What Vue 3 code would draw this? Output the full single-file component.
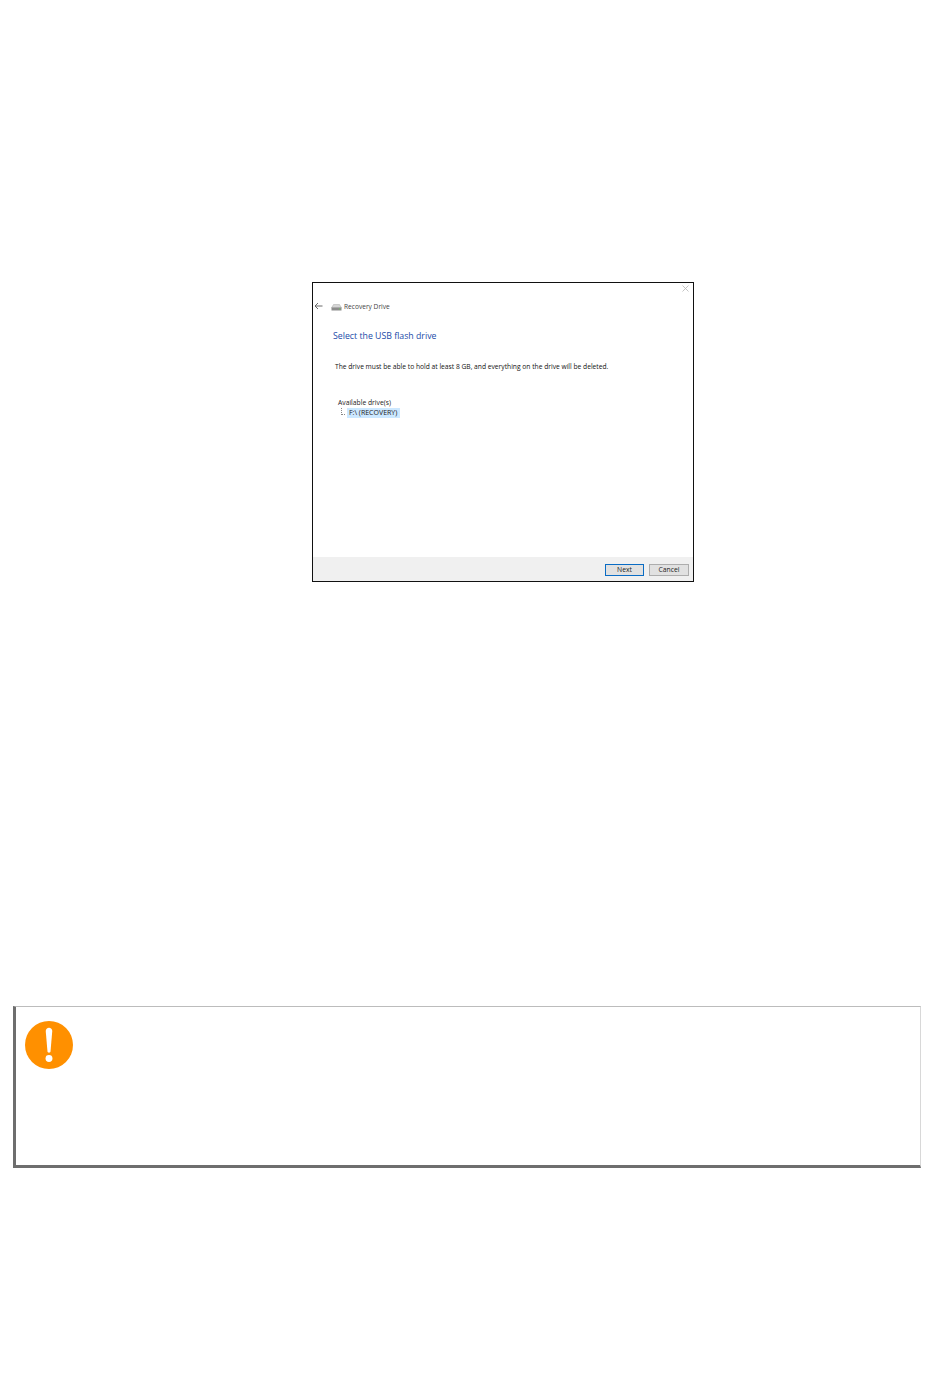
<template>
  <div class="page">
    <div class="window">
      <svg class="close" width="7" height="7" viewBox="0 0 7 7">
        <path d="M0.5 0.5L6.5 6.5M6.5 0.5L0.5 6.5" stroke="#b5b5b5" stroke-width="0.8" fill="none" />
      </svg>
      <div class="window-body">
        <div class="title-row">
          <svg class="back" width="9" height="8" viewBox="0 0 9 8">
            <path d="M8.5 4H1M4 1L1 4L4 7" stroke="#5a5a5a" stroke-width="0.9" fill="none" />
          </svg>
          <svg class="drive" width="11" height="7" viewBox="0 0 11 7">
            <path d="M2.5 0.5H8.5L10.5 4H0.5Z" fill="#d6d6d6" stroke="#a8a8a8" stroke-width="0.5" />
            <rect x="0.5" y="3.5" width="10" height="3" fill="#8d8d8d" />
            <rect x="8" y="4.5" width="1.5" height="1" fill="#6fbf5f" />
          </svg>
          <span class="app-name">Recovery Drive</span>
        </div>
        <h1 class="heading">Select the USB flash drive</h1>
        <p class="message">The drive must be able to hold at least 8 GB, and everything on the drive will be deleted.</p>
        <div class="drives">
          <div class="drives-label">Available drive(s)</div>
          <div class="drive-row">
            <span class="tree-line"></span>
            <span class="drive-item">F:\ (RECOVERY)</span>
          </div>
        </div>
      </div>
      <div class="footer">
        <button class="btn btn-primary">Next</button>
        <button class="btn">Cancel</button>
      </div>
    </div>

    <div class="notice">
      <svg class="notice-icon" width="48" height="48" viewBox="0 0 50 50">
        <circle cx="25" cy="25" r="25" fill="#ff9000" />
        <path d="M21.6 10.5C21.6 8.4 23.1 7 25 7S28.4 8.4 28.4 10.5L26.6 31.5C26.5 32.5 25.9 33 25 33S23.5 32.5 23.4 31.5Z" fill="#fff" />
        <circle cx="25" cy="39" r="3.6" fill="#fff" />
      </svg>
    </div>
  </div>
</template>

<script setup>
</script>

<style>
html,
body {
  background: #fff;
}
</style>

<style scoped>
.page {
  width: 950px;
  height: 1381px;
  padding-top: 282px;
  box-sizing: border-box;
  font-family: "Open Sans", "Liberation Sans", sans-serif;
  overflow: hidden;
}

.window {
  position: relative;
  width: 382px;
  height: 300px;
  margin-left: 312px;
  box-sizing: border-box;
  border: 1px solid #111;
  display: flex;
  flex-direction: column;
  background: #fff;
}

.close {
  position: absolute;
  top: 2px;
  right: 4px;
}

.window-body {
  flex: 1;
  padding-top: 18px;
}

.title-row {
  display: flex;
  align-items: center;
  height: 10px;
  padding-left: 1px;
}

.back {
  margin-right: 8px;
}

.drive {
  margin-right: 2px;
  margin-top: 3px;
}

.app-name {
  font-size: 6.6px;
  color: #444;
}

.heading {
  margin: 19px 0 0 20px;
  font-size: 8.75px;
  line-height: 12px;
  font-weight: 400;
  color: #1a4aa8;
}

.message {
  margin: 20px 0 0 22px;
  font-size: 6.7px;
  line-height: 10px;
  color: #111;
  white-space: nowrap;
}

.drives {
  margin: 26px 0 0 25px;
}

.drives-label {
  font-size: 6.75px;
  line-height: 10px;
  color: #222;
}

.drive-row {
  display: flex;
  align-items: center;
  height: 10px;
  padding-left: 3px;
}

.tree-line {
  width: 4px;
  height: 7px;
  margin-right: 2px;
  margin-top: -4px;
  border-left: 1px dotted #888;
  border-bottom: 1px dotted #888;
  box-sizing: border-box;
}

.drive-item {
  padding: 0 2px 0 2px;
  height: 10px;
  width: 53px;
  box-sizing: border-box;
  background: #cce8ff;
  font-size: 7px;
  line-height: 10px;
  color: #222;
  white-space: nowrap;
}

.footer {
  height: 24px;
  background: #f0f0f0;
  display: flex;
  justify-content: flex-end;
  align-items: flex-start;
  gap: 5px;
  padding: 7px 4px 0 0;
  box-sizing: border-box;
}

.btn {
  width: 40px;
  height: 12px;
  padding: 0;
  box-sizing: border-box;
  border: 1px solid #adadad;
  background: #e1e1e1;
  font-family: inherit;
  font-size: 6.8px;
  line-height: 10px;
  color: #222;
}

.btn-primary {
  width: 39px;
  border-color: #0a6cc4;
}

.notice {
  position: relative;
  width: 908px;
  height: 162px;
  margin: 424px 0 0 13px;
  box-sizing: border-box;
  border-top: 1px solid #bcbcbc;
  border-right: 1px solid #d8d8d8;
  border-bottom: 3px solid #6e6e6e;
  border-left: 3px solid #6e6e6e;
  background: #fff;
}

.notice-icon {
  position: absolute;
  top: 14px;
  left: 9px;
}
</style>
